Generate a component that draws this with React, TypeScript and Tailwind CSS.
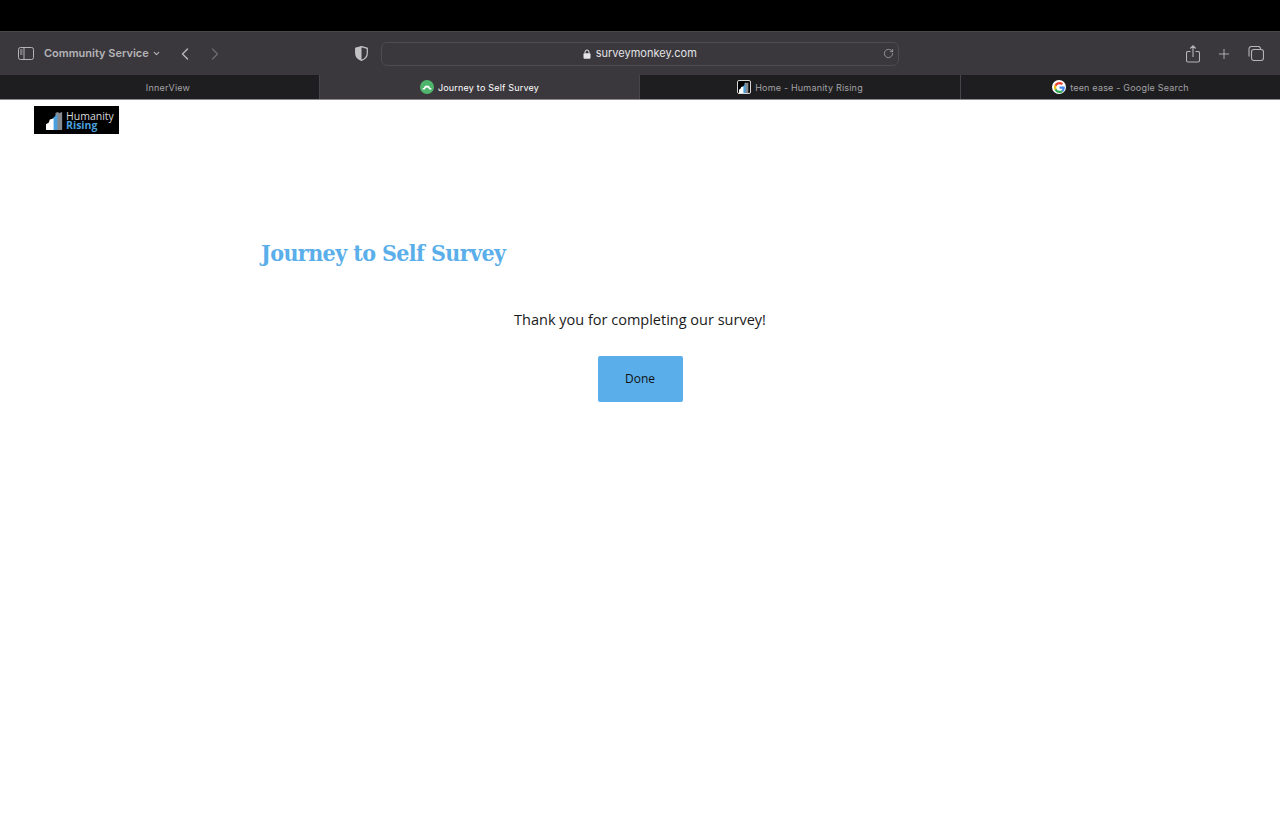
import { ChevronDown, ChevronLeft, ChevronRight, Plus, RotateCw } from 'lucide-react';

const sans = 'font-["Inter","Liberation_Sans",sans-serif]';

function HumanityMark({ size }: { size: number }) {
  return (
    <svg width={size} height={size} viewBox="0 0 20 20">
      <path d="M10 20V2l2-1 2 1 3-1v19z" fill="#85898d" />
      <path d="M7 20V8l5-5v17z" fill="#4a9fdc" />
      <path d="M0 20v-6l3-2 1-3 4-1v12z" fill="#ffffff" />
    </svg>
  );
}

function Tab({ title, active, icon, width, offset }: { title: string; active?: boolean; icon?: React.ReactNode; width: string; offset?: string }) {
  return (
    <div
      className={`${width} ${offset ?? ''} h-full flex items-center justify-center gap-[4px] border-r border-[#47454a] ${active ? 'bg-[#3a383d] text-white' : 'bg-[#1e1e20] text-[#a3a2a6]'}`}
    >
      {icon}
      <span className="text-[9px] leading-none tracking-[0.2px]">{title}</span>
    </div>
  );
}

function SurveyMonkeyIcon() {
  return (
    <span className="w-[14px] h-[14px] rounded-full bg-[#4fb56d] flex items-center justify-center">
      <svg width="10" height="10" viewBox="0 0 10 10">
        <path d="M0.500 7.500a1.200 1.200 0 0 1 1.300-1.500 3.300 3.300 0 0 1 6.400 0 1.200 1.200 0 0 1 1.300 1.500H7a2 2 0 0 0-4 0z" fill="#fff" />
      </svg>
    </span>
  );
}

function GoogleIcon() {
  return (
    <span className="w-[14px] h-[14px] rounded-full bg-white flex items-center justify-center">
      <svg width="11" height="11" viewBox="0 0 48 48">
        <path fill="#EA4335" d="M24 9.500c3.500 0 6.700 1.200 9.200 3.600l6.900-6.900C35.900 2.400 30.400 0 24 0 14.600 0 6.500 5.400 2.600 13.200l8 6.200C12.500 13.700 17.800 9.500 24 9.500z" />
        <path fill="#4285F4" d="M47 24.500c0-1.600-.1-3.100-.4-4.500H24v9h13c-.6 3-2.300 5.500-4.800 7.200l7.700 6C44.400 38 47 31.800 47 24.500z" />
        <path fill="#FBBC05" d="M10.600 28.600A14.500 14.500 0 0 1 10.600 19.400l-8-6.200a24 24 0 0 0 0 21.600z" />
        <path fill="#34A853" d="M24 48c6.500 0 11.900-2.100 15.900-5.800l-7.700-6c-2.200 1.500-4.900 2.300-8.200 2.300-6.200 0-11.500-4.200-13.400-9.900l-8 6.200C6.500 42.600 14.600 48 24 48z" />
      </svg>
    </span>
  );
}

export default function App() {
  return (
    <div className={`min-h-[831px] bg-white ${sans}`}>
      <div className="h-[31px] bg-black" />

      {/* toolbar */}
      <div className="h-[44px] bg-[#3a383d] border-t border-[#4a484d] flex items-center text-[#b5b4b7]">
        <svg className="ml-[18px]" width="16" height="13" viewBox="0 0 16 13" fill="none" stroke="currentColor">
          <rect x="0.500" y="0.500" width="15" height="12" rx="2" />
          <path d="M6 .5v12M2 3h2.500M2 5h2.500M2 7h2.500" />
        </svg>
        <span className="ml-[10px] text-[11px] font-semibold leading-none">Community Service</span>
        <ChevronDown className="ml-[3px]" size={9} strokeWidth={3} />
        <ChevronLeft className="ml-[14px]" size={20} strokeWidth={1.75} />
        <ChevronRight className="ml-[10px] text-[#6a686d]" size={20} strokeWidth={1.75} />
        <svg className="ml-[130px]" width="13" height="15" viewBox="0 0 13 15">
          <path d="M6.500 0.600 12.300 2.300V7c0 3.500-2.400 6.100-5.800 7.400C3.100 13.100.7 10.500.7 7V2.300z" fill="none" stroke="#c2c1c4" strokeWidth="1.200" />
          <path d="M6.500.6.700 2.300V7c0 3.500 2.400 6.100 5.800 7.400z" fill="#c2c1c4" />
        </svg>
        <div className="ml-[13px] w-[518px] h-[24px] rounded-[6px] border border-[#4e4c51] bg-[#3a383d] flex items-center justify-center relative text-[#e4e3e6]">
          <svg className="mr-[5px]" width="8" height="10" viewBox="0 0 8 10">
            <path d="M2 4.500V3a2 2 0 0 1 4 0v1.500" fill="none" stroke="currentColor" strokeWidth="1" />
            <rect x="0.500" y="4.300" width="7" height="5.500" rx="1" fill="currentColor" />
          </svg>
          <span className="text-[11px] leading-none">surveymonkey.com</span>
          <RotateCw className="absolute right-[4px] text-[#b5b4b7]" size={11} strokeWidth={1.5} />
        </div>
        <svg className="ml-[287px]" width="14" height="18" viewBox="0 0 14 18" fill="none" stroke="currentColor" strokeWidth="1.100">
          <path d="M4.500 6.500H2a1.500 1.500 0 0 0-1.500 1.500v7.500A1.500 1.500 0 0 0 2 17h10a1.500 1.500 0 0 0 1.500-1.500V8A1.500 1.500 0 0 0 12 6.500H9.500M7 12V1M4.300 3.500 7 .8l2.700 2.700" />
        </svg>
        <Plus className="ml-[16px]" size={16} strokeWidth={1.4} />
        <svg className="ml-[16px]" width="16" height="15" viewBox="0 0 16 15" fill="none" stroke="currentColor" strokeWidth="1.100">
          <rect x="3.500" y="3.500" width="12" height="11" rx="2.500" />
          <path d="M1 10.500V3a2.500 2.500 0 0 1 2.500-2.500H10A2.500 2.500 0 0 1 12.500 3.500" />
        </svg>
      </div>

      {/* tabs */}
      <div className="h-[25px] flex bg-[#1e1e20] border-b border-[#8a898c]">
        <Tab title="InnerView" width="w-[320px]" offset="pl-[17px]" />
        <Tab title="Journey to Self Survey" width="w-[320px]" active icon={<SurveyMonkeyIcon />} />
        <Tab
          title="Home - Humanity Rising"
          width="w-[321px]"
          icon={
            <span className="w-[14px] h-[14px] rounded-[2px] bg-black border border-[#d8d8d8] flex items-center justify-center overflow-hidden">
              <HumanityMark size={11} />
            </span>
          }
        />
        <div className="flex-1 h-full flex items-center justify-center gap-[4px] text-[#a3a2a6]">
          <GoogleIcon />
          <span className="text-[9px] leading-none tracking-[0.2px]">teen ease - Google Search</span>
        </div>
      </div>

      {/* logo */}
      <div className="ml-[34px] mt-[6px] w-[85px] h-[28px] bg-black flex items-center pl-[12px] gap-[1px]">
        <HumanityMark size={19} />
        <div className="flex flex-col font-['Open_Sans',sans-serif]">
          <span className="text-[#d7d7d7] text-[10.5px] leading-[10px]">Humanity</span>
          <span className="text-[#4a9fdc] text-[10.5px] leading-[9px] font-bold">Rising</span>
        </div>
      </div>

      {/* survey */}
      <div className="mt-[104px] ml-[261px] w-[758px]">
        <h1 className="text-[#5aaeea] text-[23px] leading-[30px] font-bold font-['DejaVu_Serif_Condensed','DejaVu_Serif',serif] tracking-[-0.6px]">
          Journey to Self Survey
        </h1>
        <div className="mt-[41px] flex flex-col items-center">
          <p className="text-[14.5px] leading-[22px] text-[#1a1a1a] font-['Open_Sans',sans-serif]">Thank you for completing our survey!</p>
          <button className="mt-[25px] w-[85px] h-[46px] rounded-[2px] bg-[#5aaeea] text-[12px] text-[#111] font-['Open_Sans',sans-serif]">
            Done
          </button>
        </div>
      </div>
    </div>
  );
}
